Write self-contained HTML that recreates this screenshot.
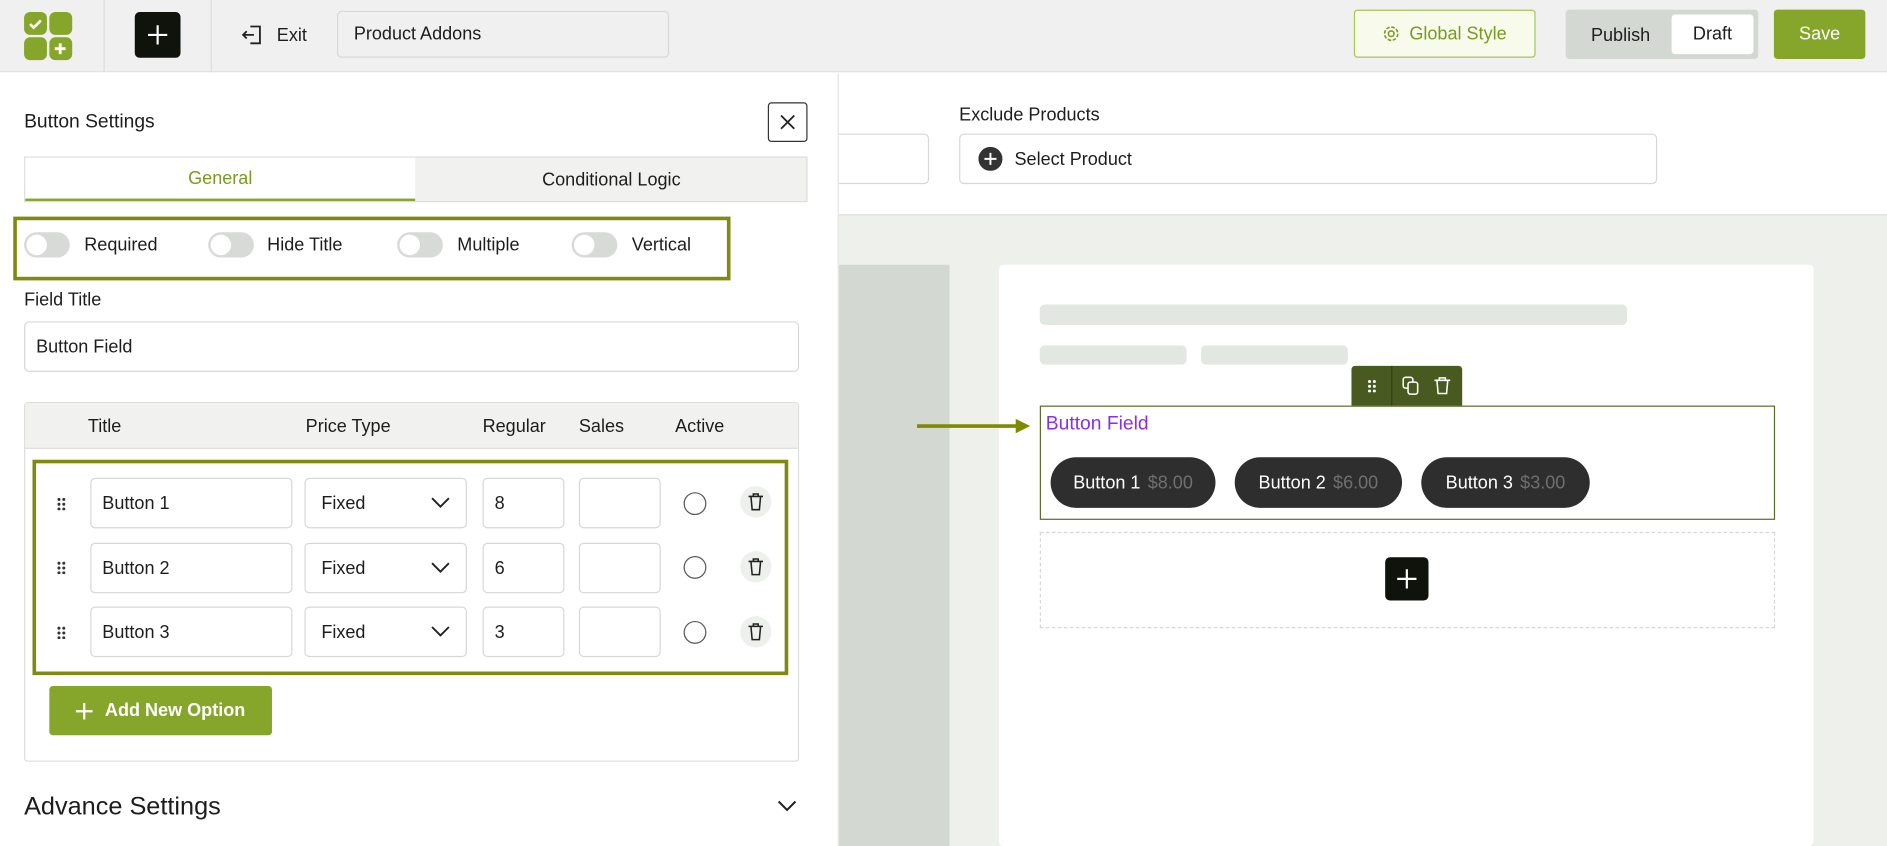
<!DOCTYPE html>
<html><head><meta charset="utf-8">
<style>
*{box-sizing:border-box;margin:0;padding:0}
body{width:1887px;height:846px;overflow:hidden;background:#fff;font-family:"Liberation Sans",sans-serif;color:#1d1d1d}
#w{position:absolute;left:0;top:0;width:1568px;height:703px;transform:scale(1.20345);transform-origin:0 0;overflow:hidden}
.a{position:absolute}
.t{font-size:15px}
.inp{position:absolute;border:1px solid #d6d8d5;border-radius:4px;background:#fff;font-size:15px;padding-left:9px;display:flex;align-items:center}
.tog{position:absolute;width:38px;height:21px;border-radius:11px;background:#d7dad6}
.tog:after{content:"";position:absolute;left:2px;top:2px;width:17px;height:17px;border-radius:50%;background:#fff}
.pill{position:absolute;top:380px;height:42px;border-radius:21px;background:#2e2e2e;color:#fff;font-size:15px;display:flex;align-items:center;justify-content:center;gap:6px}
.pill span{color:#6f6f6f}
.dots{position:absolute;width:8px;height:11px;background:radial-gradient(circle,#333 1.2px,transparent 1.4px) 0 0/4px 4px}
.radio{position:absolute;width:19px;height:19px;border:1px solid #555;border-radius:50%}
.trash{position:absolute;width:26px;height:26px;border-radius:50%;background:#eef0ed}
</style></head><body><div id="w">
<div class="a" style="left:0;top:0;width:1568px;height:60px;background:#f0f0f0;border-bottom:1px solid #e3e3e3"></div>
<div class="a" style="left:20px;top:10px;width:19px;height:19px;background:#86a62b;border-radius:5px"></div>
<div class="a" style="left:41px;top:10px;width:19px;height:19px;background:#86a62b;border-radius:5px"></div>
<div class="a" style="left:20px;top:31px;width:19px;height:19px;background:#86a62b;border-radius:5px"></div>
<div class="a" style="left:41px;top:31px;width:19px;height:19px;background:#86a62b;border-radius:5px"></div>
<svg class="a" style="left:20px;top:10px" width="40" height="40"><path d="M5 10l3 3 6-6" stroke="#fff" stroke-width="2.2" fill="none"/><path d="M30 26v9M25.5 30.5h9" stroke="#fff" stroke-width="2.4"/></svg>
<div class="a" style="left:86px;top:0;width:1px;height:60px;background:#ddd"></div>
<div class="a" style="left:175px;top:0;width:1px;height:60px;background:#ddd"></div>
<div class="a" style="left:112px;top:10px;width:38px;height:38px;background:#10130c;border-radius:4px"></div>
<svg class="a" style="left:112px;top:10px" width="38" height="38"><path d="M19 11v16M11 19h16" stroke="#fff" stroke-width="1.8"/></svg>
<svg class="a" style="left:200px;top:19px" width="20" height="20"><path d="M8 3h8v14H8M11 10H2M5 7l-3 3 3 3" stroke="#222" stroke-width="1.5" fill="none"/></svg>
<div class="a t" style="left:230px;top:21px">Exit</div>
<div class="inp" style="left:280px;top:9px;width:276px;height:39px;background:#f0f0f0;padding-left:13px">Product Addons</div>
<div class="a" style="left:1125px;top:8px;width:151px;height:40px;border:1px solid #a9c356;background:#f8fbec;border-radius:3px;color:#7a9a1f;font-size:15px;display:flex;align-items:center;justify-content:center;gap:8px"><svg width="14" height="14"><circle cx="7" cy="7" r="2.3" stroke="#7a9a1f" fill="none" stroke-width="1.3"/><circle cx="7" cy="7" r="5.5" stroke="#7a9a1f" fill="none" stroke-width="1.3" stroke-dasharray="3 1.3"/></svg>Global Style</div>
<div class="a" style="left:1301px;top:8px;width:160px;height:41px;background:#d4d8d3;border-radius:3px"></div>
<div class="a t" style="left:1322px;top:21px">Publish</div>
<div class="a" style="left:1389px;top:12px;width:68px;height:33px;background:#fff;border-radius:3px;font-size:15px;display:flex;align-items:center;justify-content:center">Draft</div>
<div class="a" style="left:1474px;top:8px;width:76px;height:41px;background:#86a62b;border-radius:3px;color:#fff;font-size:15px;display:flex;align-items:center;justify-content:center">Save</div>
<div class="a" style="left:697px;top:61px;width:871px;height:642px;background:#eef0ec"></div>
<div class="a" style="left:697px;top:61px;width:871px;height:118px;background:#fff;border-bottom:1px solid #dcdcdc"></div>
<div class="a" style="left:680px;top:111px;width:92px;height:42px;border:1px solid #d6d8d5;border-radius:4px"></div>
<div class="a t" style="left:797px;top:87px">Exclude Products</div>
<div class="inp" style="left:797px;top:111px;width:580px;height:42px;padding-left:15px;gap:10px"><svg width="20" height="20"><circle cx="10" cy="10" r="10" fill="#333"/><path d="M10 5v10M5 10h10" stroke="#fff" stroke-width="1.6"/></svg>Select Product</div>
<div class="a" style="left:697px;top:220px;width:92px;height:483px;background:#d3d8d2"></div>
<div class="a" style="left:830px;top:220px;width:677px;height:483px;background:#fff;border-radius:4px"></div>
<div class="a" style="left:864px;top:253px;width:488px;height:17px;background:#e2e7e2;border-radius:4px"></div>
<div class="a" style="left:864px;top:287px;width:122px;height:16px;background:#e2e7e2;border-radius:4px"></div>
<div class="a" style="left:998px;top:287px;width:122px;height:16px;background:#e2e7e2;border-radius:4px"></div>
<div class="a" style="left:1123px;top:304px;width:92px;height:33px;background:#485a1f;border-radius:3px 3px 0 0"></div>
<div class="a" style="left:1156px;top:304px;width:1px;height:33px;background:#33400f"></div>
<div class="dots" style="left:1136px;top:315px;background:radial-gradient(circle,#fff 1.2px,transparent 1.4px) 0 0/4px 4px"></div>
<svg class="a" style="left:1164px;top:312px" width="18" height="18"><rect x="2" y="1.5" width="8" height="9" rx="2" stroke="#fff" fill="none" stroke-width="1.3"/><rect x="6" y="5.5" width="8" height="10" rx="2" fill="#485a1f" stroke="#fff" stroke-width="1.3"/></svg>
<svg class="a" style="left:1190px;top:312px" width="18" height="18"><path d="M2 4h13M6 4V2h5v2M4 4l1 11h7l1-11" stroke="#fff" fill="none" stroke-width="1.3"/></svg>
<div class="a" style="left:864px;top:337px;width:611px;height:95px;border:1px solid #5a6b2a;background:#fff"></div>
<div class="a" style="left:869px;top:344px;color:#8e2de2;font-size:16px">Button Field</div>
<div class="pill" style="left:873px;width:137px">Button 1 <span>$8.00</span></div>
<div class="pill" style="left:1026px;width:139px">Button 2 <span>$6.00</span></div>
<div class="pill" style="left:1181px;width:140px">Button 3 <span>$3.00</span></div>
<div class="a" style="left:864px;top:442px;width:611px;height:80px;border:1px dashed #d6d8d5"></div>
<div class="a" style="left:1151px;top:463px;width:36px;height:36px;background:#10130c;border-radius:4px"></div>
<svg class="a" style="left:1151px;top:463px" width="36" height="36"><path d="M18 10v16M10 18h16" stroke="#fff" stroke-width="1.8"/></svg>
<svg class="a" style="left:760px;top:347px" width="100" height="14"><path d="M2 7h84" stroke="#7f8a00" stroke-width="3"/><path d="M84 1l12 6-12 6z" fill="#7f8a00"/></svg>
<div class="a" style="left:0;top:61px;width:697px;height:642px;background:#fff;border-right:1px solid #e3e3e3"></div>
<div class="a" style="left:20px;top:93px;font-size:16px">Button Settings</div>
<div class="a" style="left:638px;top:85px;width:33px;height:33px;border:1px solid #333;border-radius:3px"></div>
<svg class="a" style="left:638px;top:85px" width="33" height="33"><path d="M11 11l11 11M22 11L11 22" stroke="#222" stroke-width="1.5"/></svg>
<div class="a" style="left:20px;top:130px;width:651px;height:38px;border:1px solid #dcdedb;background:#f1f2f0"></div>
<div class="a" style="left:21px;top:131px;width:324px;height:36px;background:#fff;border-bottom:2px solid #86a62b;color:#7a9a1f;font-size:15px;display:flex;align-items:center;justify-content:center">General</div>
<div class="a" style="left:345px;top:131px;width:326px;height:36px;font-size:15px;display:flex;align-items:center;justify-content:center">Conditional Logic</div>
<div class="a" style="left:11px;top:180px;width:596px;height:53px;border:3px solid #808a0e"></div>
<div class="tog" style="left:20px;top:193px"></div><div class="a t" style="left:70px;top:195px">Required</div>
<div class="tog" style="left:173px;top:193px"></div><div class="a t" style="left:222px;top:195px">Hide Title</div>
<div class="tog" style="left:330px;top:193px"></div><div class="a t" style="left:380px;top:195px">Multiple</div>
<div class="tog" style="left:475px;top:193px"></div><div class="a t" style="left:525px;top:195px">Vertical</div>
<div class="a t" style="left:20px;top:241px">Field Title</div>
<div class="inp" style="left:20px;top:267px;width:644px;height:42px">Button Field</div>
<div class="a" style="left:20px;top:334px;width:644px;height:299px;border:1px solid #dcdedb;border-radius:3px"></div>
<div class="a" style="left:21px;top:335px;width:642px;height:38px;background:#f1f2f0;border-bottom:1px solid #dcdedb"></div>
<div class="a t" style="left:73px;top:346px">Title</div>
<div class="a t" style="left:254px;top:346px">Price Type</div>
<div class="a t" style="left:401px;top:346px">Regular</div>
<div class="a t" style="left:481px;top:346px">Sales</div>
<div class="a t" style="left:561px;top:346px">Active</div>
<div class="a" style="left:27px;top:382px;width:628px;height:179px;border:3px solid #808a0e"></div>
<div class="dots" style="left:47px;top:413px"></div>
<div class="inp" style="left:75px;top:397px;width:168px;height:42px">Button 1</div>
<div class="inp" style="left:253px;top:397px;width:135px;height:42px;padding-left:13px">Fixed</div>
<svg class="a" style="left:358px;top:412px" width="16" height="12"><path d="M1 2l7 7 7-7" stroke="#222" stroke-width="1.6" fill="none"/></svg>
<div class="inp" style="left:401px;top:397px;width:68px;height:42px">8</div>
<div class="inp" style="left:481px;top:397px;width:68px;height:42px"></div>
<div class="radio" style="left:568px;top:409px"></div>
<div class="trash" style="left:615px;top:404px"></div>
<svg class="a" style="left:621px;top:409px" width="14" height="16"><path d="M1 3.5h12M5 3.5V1.5h4v2M3 3.5l1 11h6l1-11" stroke="#222" fill="none" stroke-width="1.3"/></svg>
<div class="dots" style="left:47px;top:466px"></div>
<div class="inp" style="left:75px;top:451px;width:168px;height:42px">Button 2</div>
<div class="inp" style="left:253px;top:451px;width:135px;height:42px;padding-left:13px">Fixed</div>
<svg class="a" style="left:358px;top:466px" width="16" height="12"><path d="M1 2l7 7 7-7" stroke="#222" stroke-width="1.6" fill="none"/></svg>
<div class="inp" style="left:401px;top:451px;width:68px;height:42px">6</div>
<div class="inp" style="left:481px;top:451px;width:68px;height:42px"></div>
<div class="radio" style="left:568px;top:462px"></div>
<div class="trash" style="left:615px;top:458px"></div>
<svg class="a" style="left:621px;top:463px" width="14" height="16"><path d="M1 3.5h12M5 3.5V1.5h4v2M3 3.5l1 11h6l1-11" stroke="#222" fill="none" stroke-width="1.3"/></svg>
<div class="dots" style="left:47px;top:520px"></div>
<div class="inp" style="left:75px;top:504px;width:168px;height:42px">Button 3</div>
<div class="inp" style="left:253px;top:504px;width:135px;height:42px;padding-left:13px">Fixed</div>
<svg class="a" style="left:358px;top:519px" width="16" height="12"><path d="M1 2l7 7 7-7" stroke="#222" stroke-width="1.6" fill="none"/></svg>
<div class="inp" style="left:401px;top:504px;width:68px;height:42px">3</div>
<div class="inp" style="left:481px;top:504px;width:68px;height:42px"></div>
<div class="radio" style="left:568px;top:516px"></div>
<div class="trash" style="left:615px;top:512px"></div>
<svg class="a" style="left:621px;top:517px" width="14" height="16"><path d="M1 3.5h12M5 3.5V1.5h4v2M3 3.5l1 11h6l1-11" stroke="#222" fill="none" stroke-width="1.3"/></svg>
<div class="a" style="left:41px;top:570px;width:185px;height:41px;background:#86a62b;border-radius:3px;color:#fff;font-size:15px;font-weight:bold;display:flex;align-items:center;justify-content:center;gap:10px"><svg width="14" height="14"><path d="M7 0v14M0 7h14" stroke="#fff" stroke-width="1.8"/></svg>Add New Option</div>
<div class="a" style="left:20px;top:659px;font-size:21px">Advance Settings</div>
<svg class="a" style="left:645px;top:664px" width="18" height="12"><path d="M2 2l7 7 7-7" stroke="#222" stroke-width="1.7" fill="none"/></svg>
</div></body></html>
